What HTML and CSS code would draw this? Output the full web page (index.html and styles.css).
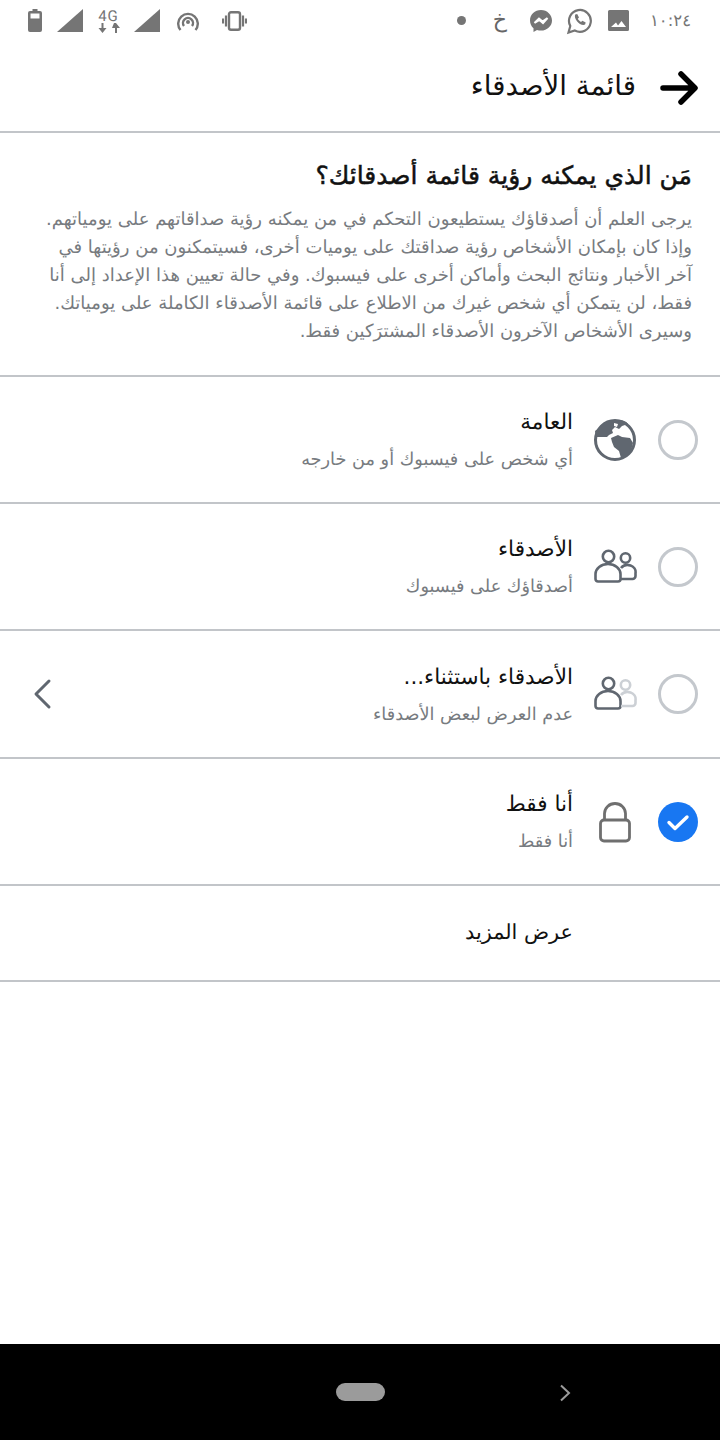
FILE: index.html
```html
<!DOCTYPE html>
<html lang="ar" dir="rtl">
<head>
<meta charset="utf-8">
<title>قائمة الأصدقاء</title>
<link rel="stylesheet" href="styles.css">
</head>
<body>
<div class="screen">
  <header class="status">
    <div class="status-right">
      <span class="clock">١٠:٢٤</span>
      <svg class="si s-image" viewBox="0 0 21 21" width="21" height="21"><path fill="#757575" fill-rule="evenodd" d="M1.500 0h18A1.500 1.500 0 0 1 21 1.500v18a1.500 1.500 0 0 1-1.500 1.500h-18A1.500 1.500 0 0 1 0 19.500v-18A1.500 1.500 0 0 1 1.500 0zM3 17h15l-4.500-6-3.500 4.500L8 12.500z"/></svg>
      <svg class="si s-whats" viewBox="0 0 26 28" width="26" height="28"><path fill="none" stroke="#757575" stroke-width="2.200" d="M2.500 25.500l1.800-6.500A10.900 10.900 0 1 1 8.800 23.500z"/><path fill="#757575" d="M9.200 7.500l2-.6 1.800 3.500-1.200 1.400c.7 1.400 1.800 2.500 3.200 3.200l1.400-1.200 3.300 1.800-.6 2c-4.500 2-11.900-5.500-9.900-10.100z"/></svg>
      <svg class="si s-mess" viewBox="0 0 24 24" width="24" height="24"><path fill="#757575" d="M12 1C5.800 1 1 5.500 1 11.500c0 3.100 1.300 5.800 3.500 7.700V23l3.500-2c1.300.4 2.600.6 4 .6 6.200 0 11-4.600 11-10.100S18.200 1 12 1z"/><path fill="none" stroke="#fff" stroke-width="2" d="M5.500 14l4.500-4.500 3.500 3 5-3.500-4.500 5-3.500-3z"/></svg>
      <span class="kha">خ</span>
      <span class="dot"></span>
    </div>
    <div class="status-left">
      <svg class="si s-vib" viewBox="0 0 25 20" width="25" height="20"><g fill="none" stroke="#757575"><rect x="7" y="1.200" width="11" height="17.600" rx="2" stroke-width="2.400"/><path stroke-width="2.200" d="M4 4.500v11M1 7.500v5M21 4.500v11M24 7.500v5"/></g></svg>
      <svg class="si s-hot" viewBox="0 0 22 20" width="22" height="20"><g fill="none" stroke="#757575" stroke-width="2.400"><path d="M3.500 19a9.800 9.800 0 1 1 15 0"/><path d="M7 15a5 5 0 1 1 8 0"/></g><circle cx="11" cy="11" r="2" fill="#757575"/></svg>
      <svg class="si" viewBox="0 0 26 23" width="26" height="23"><path fill="#757575" d="M0 23L26 0v23z"/></svg>
      <span class="net"><span class="net-g">4G</span><svg class="si" viewBox="0 0 22 10" width="22" height="10"><path fill="#757575" d="M3.500 0h2v5h3L4.500 10 .5 5h3zM16 0h2l4 5h-3v5h-2V5h-3z"/></svg></span>
      <svg class="si" viewBox="0 0 26 23" width="26" height="23"><path fill="#757575" d="M0 23L26 0v23z"/></svg>
      <svg class="si" viewBox="0 0 14 23" width="14" height="23"><path fill="#757575" fill-rule="evenodd" d="M4.500 0h5v2H12a2 2 0 0 1 2 2v17a2 2 0 0 1-2 2H2a2 2 0 0 1-2-2V4a2 2 0 0 1 2-2h2.500zM2.500 4.500v5h9v-5z"/></svg>
    </div>
  </header>

  <div class="appbar">
    <svg class="back" viewBox="0 0 38 34" width="38" height="34"><path fill="none" stroke="#000" stroke-width="5.500" stroke-linecap="round" stroke-linejoin="round" d="M3 17h31M21 3l14 14-14 14"/></svg>
    <h1 class="appbar-title">قائمة الأصدقاء</h1>
  </div>

  <section class="intro">
    <h2 class="intro-title">مَن الذي يمكنه رؤية قائمة أصدقائك؟</h2>
    <p class="intro-text">يرجى العلم أن أصدقاؤك يستطيعون التحكم في من يمكنه رؤية صداقاتهم على يومياتهم.<br>وإذا كان بإمكان الأشخاص رؤية صداقتك على يوميات أخرى، فسيتمكنون من رؤيتها في<br>آخر الأخبار ونتائج البحث وأماكن أخرى على فيسبوك. وفي حالة تعيين هذا الإعداد إلى أنا<br>فقط، لن يتمكن أي شخص غيرك من الاطلاع على قائمة الأصدقاء الكاملة على يومياتك.<br>وسيرى الأشخاص الآخرون الأصدقاء المشترَكين فقط.</p>
  </section>

  <ul class="options">
    <li class="option">
      <span class="radio"></span>
      <svg class="opt-icon" viewBox="0 0 44 44" width="44" height="44"><circle cx="22" cy="22" r="19.500" fill="#fff" stroke="#606770" stroke-width="3"/><path fill="#606770" d="M7 9C11 3 18 2 24 2c6 0 10 2 11 4l-6 2-3 3-4-2-3 3 1 3-4 2-2 2-5 0-6 0-1-6z"/><path fill="#606770" d="M18 20l7-3 4 2 8 1 3 5-2 8-4 5-6 2-2-7-5-4-2-5z"/><path fill="#fff" d="M21 5l4 1-1 3-3-1z"/></svg>
      <div class="opt-text"><div class="opt-title">العامة</div><div class="opt-sub">أي شخص على فيسبوك أو من خارجه</div></div>
    </li>
    <li class="option">
      <span class="radio"></span>
      <svg class="opt-icon" viewBox="0 0 44 44" width="44" height="44"><g fill="none" stroke="#606770" stroke-width="2.600"><circle cx="15.500" cy="11.500" r="5.700"/><circle cx="32.500" cy="13" r="4.700"/><path d="M2.500 34v-5a12.500 10 0 0 1 25 0v5a2.500 2.500 0 0 1-2.500 2.500H5A2.500 2.500 0 0 1 2.500 34z"/><path d="M28 23a8 7 0 0 1 14.500 5v3a3 3 0 0 1-3 3H28"/></g></svg>
      <div class="opt-text"><div class="opt-title">الأصدقاء</div><div class="opt-sub">أصدقاؤك على فيسبوك</div></div>
    </li>
    <li class="option option-tall">
      <span class="radio"></span>
      <svg class="opt-icon" viewBox="0 0 44 44" width="44" height="44"><g fill="none" stroke-width="2.600"><circle cx="15.500" cy="11.500" r="5.700" stroke="#606770"/><circle cx="32.500" cy="13" r="4.700" stroke="#ccd0d5"/><path stroke="#606770" d="M2.500 34v-5a12.500 10 0 0 1 25 0v5a2.500 2.500 0 0 1-2.500 2.500H5A2.500 2.500 0 0 1 2.500 34z"/><path stroke="#ccd0d5" d="M28 23a8 7 0 0 1 14.500 5v3a3 3 0 0 1-3 3H28"/></g></svg>
      <div class="opt-text"><div class="opt-title">الأصدقاء باستثناء...</div><div class="opt-sub">عدم العرض لبعض الأصدقاء</div></div>
      <svg class="chev" viewBox="0 0 20 32" width="20" height="32"><path fill="none" stroke="#606770" stroke-width="3" stroke-linecap="round" stroke-linejoin="round" d="M16 3L3 16l13 13"/></svg>
    </li>
    <li class="option">
      <span class="radio radio-on"><svg viewBox="0 0 40 40" width="40" height="40"><path fill="none" stroke="#fff" stroke-width="3.400" stroke-linecap="round" stroke-linejoin="round" d="M11 20.500l6 6L29 15"/></svg></span>
      <svg class="opt-icon" viewBox="0 0 44 44" width="44" height="44"><g fill="none" stroke="#6f6f6f" stroke-width="2.800"><rect x="7.500" y="20" width="29" height="21" rx="3.500"/><path d="M11.500 20v-6.500a10.500 10 0 0 1 21 0V20"/></g></svg>
      <div class="opt-text"><div class="opt-title">أنا فقط</div><div class="opt-sub">أنا فقط</div></div>
    </li>
    <li class="more">عرض المزيد</li>
  </ul>

  <main class="blank"></main>

  <nav class="navbar">
    <span class="pill"></span>
    <svg class="nav-chev" viewBox="0 0 12 18" width="12" height="18"><path fill="none" stroke="#9b9b9b" stroke-width="2" d="M2 1.500L10 9l-8 7.500"/></svg>
  </nav>
</div>
</body>
</html>
```
FILE: styles.css
```css
* { box-sizing: border-box; }
html, body { margin: 0; padding: 0; background: #fff; }
body { font-family: "DejaVu Sans", "Noto Sans", sans-serif; text-rendering: geometricPrecision; }
.screen { width: 720px; height: 1440px; display: flex; flex-direction: column; overflow: hidden; }

.status { height: 44px; flex: none; display: flex; justify-content: space-between; align-items: center; padding: 0 29px 3px 28px; }
.status-right, .status-left { display: flex; align-items: center; }
.status-left { gap: 15px; }
.si { display: block; flex: none; }
.s-vib { margin-right: 2px; }
.s-hot { margin-right: 8px; margin-left: 2px; }
.clock { font-size: 16.5px; color: #757575; }
.s-image { margin-right: 21px; }
.s-whats { margin-right: 16px; }
.s-mess { margin-right: 13px; }
.kha { font-size: 22px; color: #666; line-height: 24px; margin-right: 22px; }
.dot { width: 9px; height: 9px; border-radius: 50%; background: #757575; margin-right: 27px; }
.net { display: flex; flex-direction: column; align-items: center; direction: ltr; width: 21px; }
.net-g { font-family: "Roboto", sans-serif; font-size: 15px; line-height: 14px; color: #757575; letter-spacing: 1px; }

.appbar { height: 89px; flex: none; display: flex; align-items: center; gap: 24px; padding: 0 22px 0 0; border-bottom: 2px solid #c2c5c9; }
.back { flex: none; }
.appbar-title { margin: 0 0 4px; font-size: 27.7px; font-weight: 400; color: #111; }

.intro { height: 244px; flex: none; padding: 25px 28px 0 26px; border-bottom: 2px solid #c2c5c9; }
.intro-title { margin: 0 0 12px; font-size: 25px; line-height: 36px; font-weight: 400; -webkit-text-stroke: 0.5px #111; color: #111; white-space: nowrap; }
.intro-text { margin: 0; font-size: 18px; line-height: 28px; color: #777b80; white-space: nowrap; }

.options { list-style: none; margin: 0; padding: 0; flex: none; }
.option { height: 127px; display: flex; align-items: center; padding: 0 22px 0 20px; border-bottom: 2px solid #c2c5c9; }
.option-tall { height: 128px; }
.radio { width: 40px; height: 40px; flex: none; border-radius: 50%; border: 3px solid #c4c8cd; }
.radio-on { border: 0; background: #1877f2; }
.radio-on svg { display: block; }
.opt-icon { flex: none; margin: 0 21px 0 20px; }
.opt-text { flex: 1; min-width: 0; padding-top: 4px; }
.opt-title { font-size: 21.6px; line-height: 34px; color: #111; }
.opt-sub { font-size: 17.7px; line-height: 34px; margin-top: 3px; color: #777b80; }
.chev { flex: none; margin-left: 13px; }
.more { height: 96px; display: flex; align-items: center; padding: 0 147px 3px 0; font-size: 20.8px; color: #111; border-bottom: 2px solid #c2c5c9; }

.blank { flex: 1; }
.navbar { height: 96px; flex: none; background: #000; display: flex; justify-content: center; align-items: center; direction: ltr; position: relative; }
.pill { width: 49px; height: 18px; border-radius: 9px; background: #9b9b9b; }
.nav-chev { position: absolute; left: 559px; top: 40px; }
```
